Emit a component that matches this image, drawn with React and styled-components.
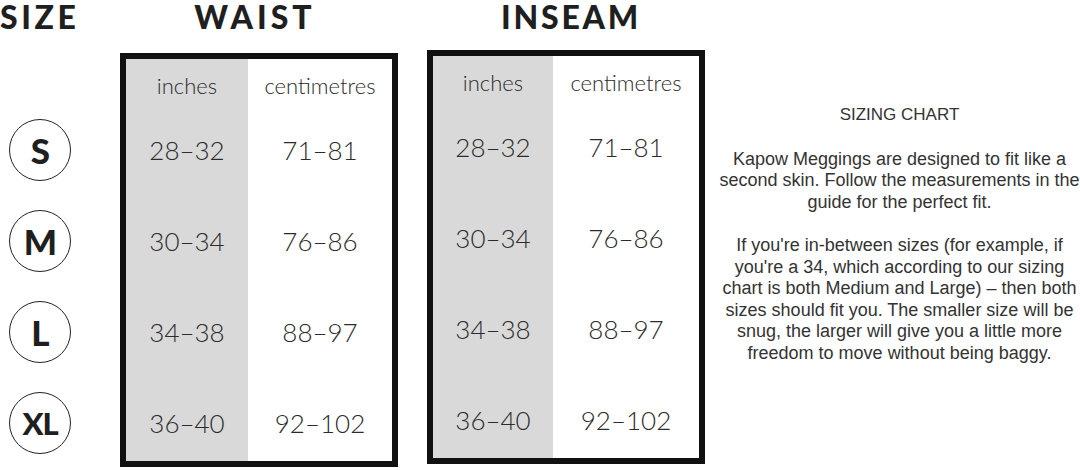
import React from "react";
import styled, { createGlobalStyle } from "styled-components";

const GlobalStyle = createGlobalStyle`
  html, body {
    margin: 0;
    padding: 0;
    background: #ffffff;
  }
`;

const Page = styled.div`
  width: 1080px;
  height: 470px;
  display: flex;
  flex-direction: row;
  overflow: hidden;
  background: #ffffff;
  color: #222;
`;

const Heading = styled.h1`
  margin: 0;
  padding-left: ${(props) => Math.max(props.$shift || 0, 0)}px;
  padding-right: ${(props) => Math.max(-(props.$shift || 0), 0)}px;
  font-family: Lato, "Open Sans", sans-serif;
  font-weight: 900;
  font-size: 32px;
  line-height: 34px;
  letter-spacing: ${(props) => props.$spacing || 2.6}px;
  color: #1f1f1f;
  text-align: ${(props) => props.$align || "center"};
`;

const SizeColumn = styled.div`
  width: 120px;
  flex: none;
  display: flex;
  flex-direction: column;
`;

const CircleList = styled.div`
  display: flex;
  flex-direction: column;
  gap: 29px;
  margin: 85px 0 0 9px;
`;

const SizeCircle = styled.div`
  width: 62px;
  height: 62px;
  box-sizing: border-box;
  border: 1.5px solid #222;
  border-radius: 50%;
  display: flex;
  align-items: center;
  justify-content: center;
  font-family: Lato, "Open Sans", sans-serif;
  font-weight: 900;
  font-size: ${(props) => (props.$small ? "31px" : "35px")};
  letter-spacing: -1px;
  color: #1f1f1f;
`;

const Section = styled.section`
  width: 278px;
  flex: none;
  margin-left: ${(props) => props.$gap || 0}px;
  display: flex;
  flex-direction: column;
`;

const Table = styled.div`
  margin-top: ${(props) => props.$top}px;
  width: 278px;
  height: 414px;
  box-sizing: border-box;
  border: 6px solid #111;
  display: grid;
  grid-template-columns: ${(props) => props.$left}px 1fr;
  grid-template-rows: 46px 91px 91px 91px 1fr;
`;

const Cell = styled.div`
  background: ${(props) => (props.$shade ? "#d9d9d9" : "#ffffff")};
  display: flex;
  justify-content: center;
  align-items: flex-start;
  padding-top: ${(props) => (props.$head ? 14 : 30)}px;
  box-sizing: border-box;
  font-family: Lato, "Open Sans", sans-serif;
  font-weight: 300;
  font-size: ${(props) => (props.$head ? "22px" : "26px")};
  line-height: ${(props) => (props.$head ? "26px" : "30px")};
  color: #2b2b2b;
  white-space: nowrap;
`;

const Notes = styled.div`
  flex: 1;
  padding: 104px 0 0 14px;
  box-sizing: border-box;
  font-family: "Liberation Sans", Arial, sans-serif;
  font-size: 18px;
  line-height: 21.5px;
  color: #333;
  text-align: center;
  white-space: nowrap;
`;

const NoteTitle = styled.p`
  margin: 0 0 23px;
  font-size: 17px;
`;

const NoteText = styled.p`
  margin: 0 0 22px;
`;

const sizes = ["S", "M", "L", "XL"];
const waist = [
  ["28–32", "71–81"],
  ["30–34", "76–86"],
  ["34–38", "88–97"],
  ["36–40", "92–102"],
];

function MeasureTable({ title, rows, left, gap, top, shift, spacing }) {
  return (
    <Section $gap={gap}>
      <Heading $shift={shift} $spacing={spacing}>
        {title}
      </Heading>
      <Table $left={left} $top={top}>
        <Cell $shade $head>inches</Cell>
        <Cell $head>centimetres</Cell>
        {rows.map((row) => (
          <React.Fragment key={row[0]}>
            <Cell $shade>{row[0]}</Cell>
            <Cell>{row[1]}</Cell>
          </React.Fragment>
        ))}
      </Table>
    </Section>
  );
}

export default function App() {
  return (
    <>
      <GlobalStyle />
      <Page>
        <SizeColumn>
          <Heading $align="left" $spacing={3.6}>
            SIZE
          </Heading>
          <CircleList>
            {sizes.map((s) => (
              <SizeCircle key={s} $small={s === "XL"}>
                {s}
              </SizeCircle>
            ))}
          </CircleList>
        </SizeColumn>
        <MeasureTable
          title="WAIST"
          rows={waist}
          left={122}
          gap={0}
          top={19}
          shift={-8}
          spacing={4}
        />
        <MeasureTable
          title="INSEAM"
          rows={waist}
          left={120}
          gap={29}
          top={16}
          shift={10}
          spacing={2.8}
        />
        <Notes>
          <NoteTitle>SIZING CHART</NoteTitle>
          <NoteText>
            Kapow Meggings are designed to fit like a<br />
            second skin. Follow the measurements in the<br />
            guide for the perfect fit.
          </NoteText>
          <NoteText>
            If you're in-between sizes (for example, if<br />
            you're a 34, which according to our sizing<br />
            chart is both Medium and Large) – then both<br />
            sizes should fit you. The smaller size will be<br />
            snug, the larger will give you a little more<br />
            freedom to move without being baggy.
          </NoteText>
        </Notes>
      </Page>
    </>
  );
}
